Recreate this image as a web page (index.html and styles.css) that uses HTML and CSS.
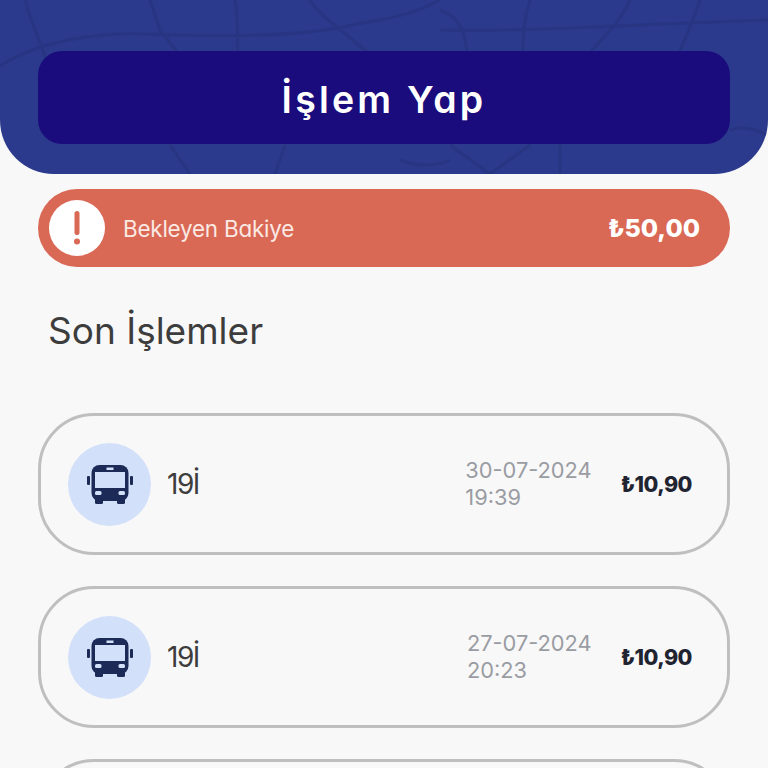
FILE: index.html
```html
<!DOCTYPE html>
<html lang="en">
<head>
    <meta charset="UTF-8">
    <meta name="viewport" content="width=device-width, initial-scale=1.0">
    <title>Son İşlemler</title>
    <link rel="stylesheet" href="styles.css">
</head>
<body>

    <div class="header">
        <svg class="map" viewBox="0 0 768 174" preserveAspectRatio="none">
            <path d="M0 66 C40 40 100 32 147 34 S290 38 343 27 S405 18 440 0"/>
            <path d="M25 0 C30 20 40 40 50 70"/>
            <path d="M150 0 L160 30 L195 75"/>
            <path d="M235 0 C240 25 235 50 240 75"/>
            <path d="M310 0 C320 20 375 50 385 75"/>
            <path d="M440 10 C470 20 465 50 470 75"/>
            <path d="M530 0 C520 30 525 50 520 75"/>
            <path d="M630 0 C620 25 590 50 570 75"/>
            <path d="M700 0 C690 30 680 50 670 75"/>
            <path d="M440 30 C520 32 620 25 768 20"/>
            <path d="M170 145 L190 174"/>
            <path d="M285 145 L275 174"/>
            <path d="M450 145 L490 174 L530 145"/>
            <path d="M560 145 L560 174"/>
            <path d="M400 160 C420 168 440 165 450 160"/>
            <path d="M730 130 C745 125 755 130 768 135"/>
        </svg>
        <button class="action-button">İşlem Yap</button>
    </div>

    <div class="alert">
        <div class="alert-icon">
            <svg viewBox="0 0 56 56" width="56" height="56">
                <circle cx="28" cy="28" r="28" fill="#fff"/>
                <rect x="25.5" y="11" width="5" height="24" rx="2.5" fill="#d96855"/>
                <circle cx="28" cy="41.5" r="3" fill="#d96855"/>
            </svg>
        </div>
        <span class="alert-label">Bekleyen Bakiye</span>
        <span class="alert-amount">₺50,00</span>
    </div>

    <h2 class="title">Son İşlemler</h2>

    <div class="list">
        <div class="card">
            <div class="bus-icon">
                <svg viewBox="0 0 46 39" width="46" height="39">
                    <rect x="0" y="11" width="3" height="9" rx="1" fill="#1b2a56"/>
                    <rect x="43" y="11" width="3" height="9" rx="1" fill="#1b2a56"/>
                    <rect x="8" y="32" width="8" height="7" rx="1.5" fill="#1b2a56"/>
                    <rect x="30" y="32" width="8" height="7" rx="1.5" fill="#1b2a56"/>
                    <rect x="4.5" y="0" width="37" height="36" rx="8" fill="#1b2a56"/>
                    <rect x="8" y="7" width="30" height="16" fill="#d3e0fa"/>
                    <rect x="19.5" y="2.5" width="7" height="2.5" fill="#d3e0fa"/>
                    <rect x="8" y="26" width="6.5" height="4" rx="1.5" fill="#d3e0fa"/>
                    <rect x="31.5" y="26" width="6.5" height="4" rx="1.5" fill="#d3e0fa"/>
                </svg>
            </div>
            <span class="line">19İ</span>
            <div class="date">30-07-2024<br>19:39</div>
            <span class="price">₺10,90</span>
        </div>
        <div class="card">
            <div class="bus-icon">
                <svg viewBox="0 0 46 39" width="46" height="39">
                    <rect x="0" y="11" width="3" height="9" rx="1" fill="#1b2a56"/>
                    <rect x="43" y="11" width="3" height="9" rx="1" fill="#1b2a56"/>
                    <rect x="8" y="32" width="8" height="7" rx="1.5" fill="#1b2a56"/>
                    <rect x="30" y="32" width="8" height="7" rx="1.5" fill="#1b2a56"/>
                    <rect x="4.5" y="0" width="37" height="36" rx="8" fill="#1b2a56"/>
                    <rect x="8" y="7" width="30" height="16" fill="#d3e0fa"/>
                    <rect x="19.5" y="2.5" width="7" height="2.5" fill="#d3e0fa"/>
                    <rect x="8" y="26" width="6.5" height="4" rx="1.5" fill="#d3e0fa"/>
                    <rect x="31.5" y="26" width="6.5" height="4" rx="1.5" fill="#d3e0fa"/>
                </svg>
            </div>
            <span class="line">19İ</span>
            <div class="date">27-07-2024<br>20:23</div>
            <span class="price">₺10,90</span>
        </div>
        <div class="card"></div>
    </div>

</body>
</html>
```

FILE: styles.css
```css
body {
    margin: 0;
    padding: 0;
    height: 768px;
    overflow: hidden;
    background-color: #f8f8f8;
    font-family: "Inter", "Noto Sans", sans-serif;
    font-feature-settings: "cv11";
    color: #3d3d3d;
}
.header {
    position: relative;
    box-sizing: border-box;
    height: 174px;
    padding: 51px 38px 0;
    background: #2b3a8c;
    border-radius: 0 0 54px 54px;
    overflow: hidden;
}
.map {
    position: absolute;
    left: 0;
    top: 0;
    width: 100%;
    height: 100%;
    filter: blur(0.6px);
}
.map path {
    fill: none;
    stroke: #283583;
    stroke-width: 3;
}
.action-button {
    position: relative;
    display: block;
    width: 100%;
    height: 93px;
    padding: 4px 0 0;
    background: #1a0c7c;
    color: white;
    font-family: inherit;
    font-feature-settings: inherit;
    font-size: 37.5px;
    font-weight: 600;
    letter-spacing: 3.2px;
    border: none;
    border-radius: 24px;
}
.alert {
    display: flex;
    align-items: center;
    box-sizing: border-box;
    height: 78px;
    margin: 15px 38px 0;
    padding: 0 30px 0 11px;
    background: #d96855;
    border-radius: 39px;
    color: white;
}
.alert-icon {
    display: flex;
}
.alert-label {
    margin-left: 18px;
    font-size: 22.4px;
    letter-spacing: -0.2px;
    color: #fbe9e3;
}
.alert-amount {
    margin-left: auto;
    font-size: 25px;
    font-weight: 800;
}
.title {
    margin: 41px 0 0 48px;
    font-size: 37px;
    line-height: 46px;
    font-weight: 400;
    color: #3d3d3d;
}
.list {
    display: flex;
    flex-direction: column;
    gap: 31px;
    height: 355px;
    margin: 59px 38px 0;
    overflow: hidden;
}
.card {
    display: flex;
    flex-shrink: 0;
    align-items: center;
    box-sizing: border-box;
    height: 142px;
    padding: 0 35px 0 27px;
    border: 3px solid #bfbfbf;
    border-radius: 56px;
}
.bus-icon {
    display: flex;
    align-items: center;
    justify-content: center;
    width: 83px;
    height: 83px;
    background: #d3e0fa;
    border-radius: 50%;
}
.line {
    margin-left: 16px;
    font-size: 28px;
    letter-spacing: -1.5px;
}
.date {
    margin-left: auto;
    font-size: 21.8px;
    line-height: 27px;
    color: #9a9ca3;
}
.price {
    margin-left: 29px;
    font-size: 21.5px;
    font-weight: 800;
    letter-spacing: -0.5px;
    color: #1f2430;
}
```
